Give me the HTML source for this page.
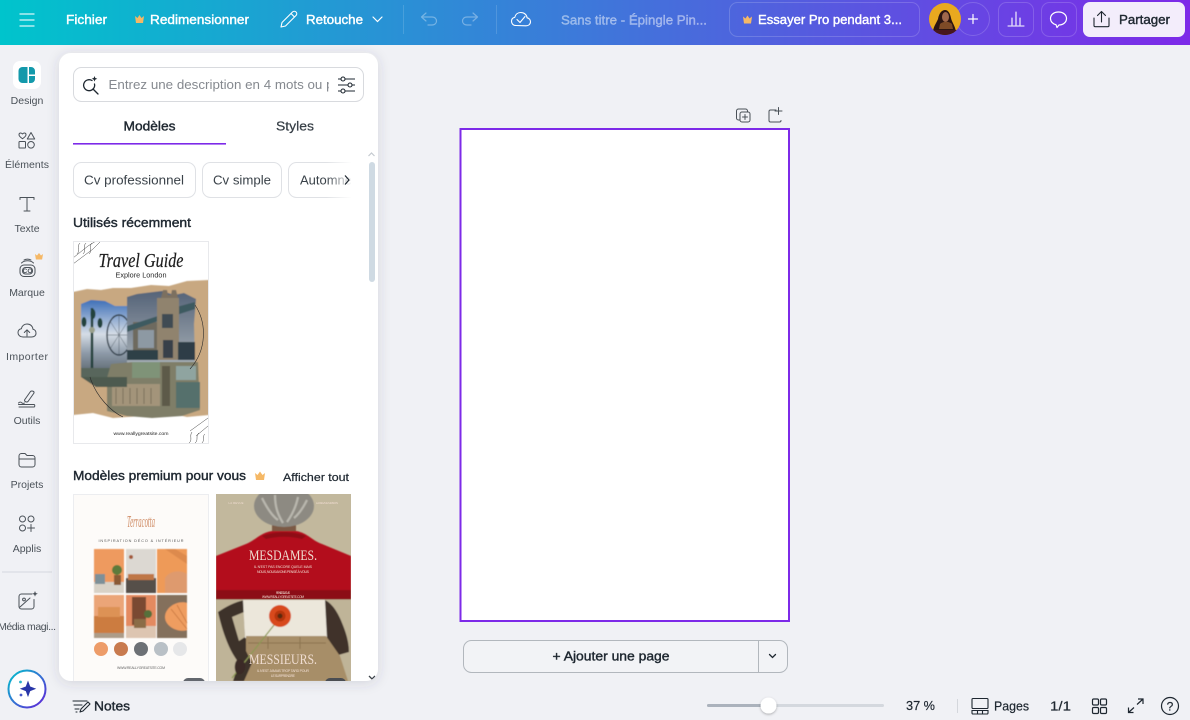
<!DOCTYPE html>
<html lang="fr"><head><meta charset="utf-8"><title>Canva</title>
<style>html,body{margin:0;padding:0;width:1190px;height:720px;overflow:hidden;background:#f0f1f5}svg{display:block;filter:blur(.25px)}text{font-family:"Liberation Sans",sans-serif}.mw{stroke:#fff;stroke-width:.4}.md{stroke:#1e2730;stroke-width:.4}.ms{stroke:#1e2730;stroke-width:.2}</style></head>
<body>
<svg xmlns="http://www.w3.org/2000/svg" width="1190" height="720" viewBox="0 0 1190 720">
<defs>
<linearGradient id="top" x1="0" x2="1" y1="0" y2="0"><stop offset="0" stop-color="#00c4cc"/><stop offset="1" stop-color="#7d2ae8"/></linearGradient>
<linearGradient id="ring" x1="0" x2="1" y1="0" y2="1"><stop offset="0" stop-color="#00c4cc"/><stop offset="1" stop-color="#6420d8"/></linearGradient>
<linearGradient id="sky" x1="0" x2="0" y1="0" y2="1"><stop offset="0" stop-color="#3f70b8"/><stop offset=".45" stop-color="#d5dde6"/><stop offset=".7" stop-color="#8d9aa8"/><stop offset="1" stop-color="#566068"/></linearGradient>
<linearGradient id="slate" x1="0" x2="0" y1="0" y2="1"><stop offset="0" stop-color="#556378"/><stop offset="1" stop-color="#a5aeb5"/></linearGradient>
<linearGradient id="fade" x1="0" x2="1" y1="0" y2="0"><stop offset="0" stop-color="#fff" stop-opacity="0"/><stop offset="1" stop-color="#fff"/></linearGradient>
<filter id="sh" x="-10%" y="-10%" width="120%" height="120%"><feDropShadow dx="0" dy="2" stdDeviation="6" flood-color="#39405a" flood-opacity=".16"/></filter>
<filter id="b" x="-5%" y="-5%" width="110%" height="110%"><feGaussianBlur stdDeviation=".6"/></filter>
<filter id="tsh" x="-50%" y="-50%" width="200%" height="200%"><feDropShadow dx="0" dy="1" stdDeviation="1.2" flood-opacity=".3"/></filter>
<clipPath id="panel"><rect x="59" y="53" width="319" height="628" rx="12"/></clipPath>
<clipPath id="c1"><rect x="73" y="494" width="136" height="187"/></clipPath>
<clipPath id="c2"><rect x="216" y="494" width="135" height="187"/></clipPath>
<clipPath id="c3"><rect x="73" y="241" width="136" height="203"/></clipPath>
<clipPath id="chips"><rect x="60" y="155" width="291" height="50"/></clipPath>
<clipPath id="search"><rect x="100" y="70" width="229" height="28"/></clipPath>
<clipPath id="av"><circle cx="945" cy="19" r="16"/></clipPath>
</defs>
<rect width="1190" height="720" fill="#f0f1f5"/>
<rect width="1190" height="45" fill="url(#top)"/>

<!-- topbar -->
<g stroke="#fff" stroke-width="1.300" fill="none" stroke-linecap="round" opacity=".85"><path d="M20 14H34M20 20H34M20 26H34"/></g>
<text x="66" y="24" font-size="13" class="mw" fill="#fff" textLength="41" lengthAdjust="spacingAndGlyphs">Fichier</text>
<path d="M135 16l2.500 2 2-3 2 3 2.500-2-1 7h-7z" fill="#f5b866"/>
<text x="150" y="24" font-size="13" class="mw" fill="#fff" textLength="99" lengthAdjust="spacingAndGlyphs">Redimensionner</text>
<path d="M281 27l1-4.500 10.500-10.500c1-1 2.500-1 3.500 0s1 2.500 0 3.500L285.500 26z M291 13.500l3.500 3.500" fill="none" stroke="#fff" stroke-width="1.100" stroke-linejoin="round"/>
<text x="306" y="24" font-size="13" class="mw" fill="#fff" textLength="57" lengthAdjust="spacingAndGlyphs">Retouche</text>
<path d="M373 17l4.500 4.500 4.500-4.500" fill="none" stroke="#fff" stroke-width="1.200" stroke-linecap="round"/>
<path d="M403.500 5V34M496.500 5V34" stroke="#fff" stroke-opacity=".14"/>
<g fill="none" stroke="#fff" stroke-opacity=".34" stroke-width="1.200" stroke-linecap="round" stroke-linejoin="round"><path d="M426 13l-4.500 4 4.500 4M422 17h10c3 0 4.500 2 4.500 4s-1.500 4-4.500 4h-4"/><path d="M473 13l4.500 4-4.500 4M477 17h-10c-3 0-4.500 2-4.500 4s1.500 4 4.500 4h4"/></g>
<path d="M516 25.500c-3 0-4.500-2-4.500-4.200 0-2 1.300-3.600 3.300-4 .6-3 3-4.800 6-4.800 3.500 0 6 2.300 6.300 5.300 1.800.4 3.400 1.900 3.400 4 0 2.500-2 4-4.500 4z M517 19.500l3 3 5-6" fill="none" stroke="#fff" stroke-width="1.100" stroke-linecap="round" stroke-linejoin="round"/>
<text x="561" y="24.500" font-size="13" fill="#fff" fill-opacity=".42" stroke="#fff" stroke-opacity=".42" stroke-width=".4" textLength="146" lengthAdjust="spacingAndGlyphs">Sans titre - Épingle Pin...</text>
<rect x="729.500" y="2.500" width="190" height="34" rx="8" fill="none" stroke="#fff" stroke-opacity=".17"/>
<path d="M743 16.500l2.500 2 2-3 2 3 2.500-2-1 7h-7z" fill="#f5b866"/>
<text x="758" y="24" font-size="13" class="mw" fill="#fff" textLength="144" lengthAdjust="spacingAndGlyphs">Essayer Pro pendant 3...</text>
<circle cx="973" cy="19" r="16.500" fill="none" stroke="#fff" stroke-opacity=".17"/>
<circle cx="945" cy="19" r="16" fill="#e9a91f"/>
<g clip-path="url(#av)"><path d="M933 36c-1-8 3-12 5-17 1-6 4-9 7-9s5 3 6 8c1 5 6 10 5 18z" fill="#2c1512"/><ellipse cx="945.500" cy="17" rx="3.500" ry="5" fill="#a0684c"/><path d="M940 24c3-3 9-3 12 0l1 5h-14z" fill="#7d4a26"/><rect x="932" y="30" width="28" height="6" fill="#47161f"/></g>
<path d="M973 14.500v9M968.500 19h9" stroke="#fff" stroke-width="1.200" stroke-linecap="round"/>
<rect x="998.500" y="2.500" width="35" height="34" rx="8" fill="none" stroke="#fff" stroke-opacity=".17"/>
<path d="M1008 26h16M1012 25V18M1016 25V12M1020 25V18" stroke="#fff" stroke-width="1.100" fill="none" stroke-linecap="round"/>
<rect x="1041.500" y="2.500" width="35" height="34" rx="8" fill="none" stroke="#fff" stroke-opacity=".17"/>
<path d="M1058.500 12c4.700 0 8 2.800 8 6.500s-3.300 6.500-7.500 6.500l-2 2.500-1-2.800c-3.300-.8-5.500-3.200-5.500-6.200 0-3.700 3.300-6.500 8-6.500z" fill="none" stroke="#fff" stroke-width="1.200" stroke-linejoin="round"/>
<rect x="1083" y="2" width="102" height="35" rx="7" fill="#f3edfb"/>
<path d="M1094 18v7.500c0 .8.500 1.200 1.200 1.200h12.600c.7 0 1.200-.4 1.200-1.200V18M1101.500 22V12M1097.500 15.500l4-4 4 4" fill="none" stroke="#1e2730" stroke-width="1.100" stroke-linecap="round" stroke-linejoin="round"/>
<text x="1119" y="24" font-size="13" class="md" fill="#1e2730" textLength="51" lengthAdjust="spacingAndGlyphs">Partager</text>

<!-- sidebar -->
<rect x="13" y="61" width="28" height="28" rx="7" fill="#fff"/>
<path d="M22.500 67H27.500V83H22.500a4 4 0 0 1-4-4v-8a4 4 0 0 1 4-4z" fill="#1399ab"/><path d="M29 67h2a4 4 0 0 1 4 4v3.500h-6zM29 76h6v3a4 4 0 0 1-4 4h-2z" fill="#1399ab"/>
<g font-size="10.500" fill="#4a5158" text-anchor="middle">
<text x="27" y="104">Design</text><text x="27" y="168" textLength="44">Éléments</text><text x="27" y="232">Texte</text><text x="27" y="296">Marque</text><text x="27" y="360" textLength="42">Importer</text><text x="27" y="424">Outils</text><text x="27" y="488">Projets</text><text x="27" y="552">Applis</text><text x="27" y="630" textLength="58">Média magi...</text>
</g>
<g fill="none" stroke="#4a5158" stroke-width="1" stroke-linejoin="round" stroke-linecap="round">
<path d="M22.500 134c-1-1.500-3.500-1.500-3.500.7 0 1.700 1.800 2.700 3.500 4 1.700-1.300 3.500-2.300 3.500-4 0-2.200-2.500-2.200-3.500-.7z"/><path d="M31 132.500l3.700 6.500h-7.400z"/><rect x="19" y="141.500" width="6.500" height="6.500" rx=".8"/><circle cx="31" cy="144.800" r="3.300"/>
<path d="M20 199.500v-2h14v2M27 197.500v13.500M24 211h6"/>
<rect x="20" y="265" width="15" height="11.500" rx="4"/><rect x="22.500" y="267.500" width="10" height="6.500" rx="3"/><path d="M21.500 263c3-3 9-3 12 0M24 260c2-1.200 5-1.200 7 0"/>
<path d="M23 337c-3 0-5-2-5-4.200 0-2 1.300-3.600 3.300-4 .6-3 3-4.800 5.700-4.800 3.500 0 5.700 2.300 6 5.300 1.800.4 3 1.900 3 4 0 2.500-2 3.700-4.500 3.700h-8.500zM27 336v-6M24.300 332.500l2.700-2.700 2.700 2.700"/>
<path d="M18.500 403c3-3 3 2 6 0M18.500 404.500h15.500c1 0 1 2.500 0 2.500H19M24.500 400l6-8.500c1-1 4-.5 3.500 1.500l-6 8.500c-1 1-3.500 .5-3.500-1.500z"/>
<path d="M19 456a2.500 2.500 0 0 1 2.500-2.500h3.500l2 2h5.500a2.500 2.500 0 0 1 2.500 2.500v6.500a2.500 2.500 0 0 1-2.500 2.500H21.500a2.500 2.500 0 0 1-2.500-2.500zM19 459h16"/>
<rect x="19.500" y="516" width="6" height="6" rx="3"/><rect x="28" y="516" width="6" height="6" rx="3"/><rect x="19.500" y="525" width="6" height="6" rx="3"/><path d="M31 524.500v7M27.500 528h7"/>
<path d="M32 594h-10.500a2.500 2.500 0 0 0-2.500 2.500v10a2.500 2.500 0 0 0 2.500 2.500h10a2.500 2.500 0 0 0 2.500-2.500v-7M20 607l10-9"/><circle cx="24" cy="599.500" r="1.400"/>
</g>
<path d="M35 591l.8 2 2 .8-2 .8-.8 2-.8-2-2-.8 2-.8z" fill="#4a5158"/>
<path d="M35 254l2 1.500 2-2.500 2 2.500 2-1.500-.9 5.500h-6.200z" fill="#f5b866"/>
<text x="27.500" y="273" font-size="6.500" font-weight="700" fill="#4a5158" text-anchor="middle">CO</text>
<rect x="2" y="571.500" width="50" height="1" fill="#d5d8df"/>
<circle cx="27" cy="689" r="18.500" fill="#fff" stroke="url(#ring)" stroke-width="2"/>
<path d="M28 680.500l2.200 6 6 2.300-6 2.300-2.200 6-2.200-6-6-2.300 6-2.300z" fill="#2936a8"/><circle cx="20.500" cy="682" r="1.400" fill="#2cb1c8"/><circle cx="21" cy="695" r="1.400" fill="#4657c9"/>

<!-- panel -->
<rect x="59" y="53" width="319" height="628" rx="12" fill="#fff" filter="url(#sh)"/>
<g clip-path="url(#panel)">
<rect x="73.500" y="67.500" width="290" height="34" rx="8" fill="#fff" stroke="#d8dade"/>
<path d="M92 80.500a5.500 5.500 0 1 0 2.500 3.500" fill="none" stroke="#1e2730" stroke-width="1.300" stroke-linecap="round"/><path d="M93 89l5 5" stroke="#1e2730" stroke-width="1.300" stroke-linecap="round"/><path d="M94.500 76l.8 2 2 .8-2 .8-.8 2-.8-2-2-.8 2-.8z" fill="#1e2730"/>
<g clip-path="url(#search)"><text x="108.500" y="89" font-size="13" fill="#85898f" textLength="225" lengthAdjust="spacingAndGlyphs">Entrez une description en 4 mots ou p</text></g>
<g stroke="#1e2730" stroke-width="1.100" fill="#fff"><path d="M338 79h17M338 85h17M338 91h17"/><circle cx="343" cy="79" r="2"/><circle cx="350" cy="85" r="2"/><circle cx="343" cy="91" r="2"/></g>
<text x="149.500" y="130.500" font-size="13" class="md" fill="#1e2730" text-anchor="middle" textLength="52" lengthAdjust="spacingAndGlyphs">Modèles</text>
<text x="295" y="130.500" font-size="13" fill="#3a4249" class="ms" text-anchor="middle" textLength="38" lengthAdjust="spacingAndGlyphs">Styles</text>
<rect x="73" y="143" width="153" height="1.600" fill="#7d2ae8"/>
<g clip-path="url(#chips)">
<rect x="73.500" y="162.500" width="122" height="35" rx="8" fill="#fff" stroke="#dfe1e5"/>
<rect x="202.500" y="162.500" width="79" height="35" rx="8" fill="#fff" stroke="#dfe1e5"/>
<rect x="288.500" y="162.500" width="90" height="35" rx="8" fill="#fff" stroke="#dfe1e5"/>
<g font-size="13" fill="#3a4249"><text x="84" y="184.500" textLength="100" lengthAdjust="spacingAndGlyphs">Cv professionnel</text><text x="213" y="184.500" textLength="58" lengthAdjust="spacingAndGlyphs">Cv simple</text><text x="300" y="184.500" textLength="52" lengthAdjust="spacingAndGlyphs">Automne</text></g>
<rect x="326" y="160" width="26" height="40" fill="url(#fade)"/>
</g>
<path d="M345 175.500l4 4.500-4 4.500" fill="none" stroke="#1e2730" stroke-width="1.200"/>
<text x="73" y="227" font-size="13" class="md" fill="#1e2730" textLength="118" lengthAdjust="spacingAndGlyphs">Utilisés récemment</text>

<!-- travel guide -->
<g clip-path="url(#c3)"><rect x="73" y="241" width="136" height="203" fill="#fff"/>
<g filter="url(#b)">
<path d="M73 292l14-3 14 1 12-2 18 0 20-3 18 1 18-5 22-1v135l-22 2-14-3-30 2-30 2-20-5-20 2z" fill="#c8a881"/>
<path d="M81 304l10-4 14 1 10 5 18 0v70l-20-1-10-3-22 1z" fill="url(#sky)"/>
<ellipse cx="119" cy="335" rx="12" ry="20" fill="none" stroke="#33404c" stroke-width="1.400"/><path d="M119 315v40M107 335h24M110 321l18 28M128 321l-18 28" stroke="#4b5762" stroke-width=".5"/>
<path d="M92 308v60" stroke="#22403a" stroke-width="2.500"/><ellipse cx="84" cy="322" rx="2.500" ry="5" fill="#24423c"/><ellipse cx="93" cy="314" rx="2.500" ry="5" fill="#24423c"/><ellipse cx="100" cy="323" rx="2.500" ry="5" fill="#24423c"/><circle cx="92" cy="330" r="3" fill="#9aa08c"/>
<path d="M81 368h52v10H98l-17-1z" fill="#58665c"/>
<path d="M127 297l10-3 25-3 12 4 10-2 12 6-2 25 1 38-68 1z" fill="url(#slate)"/>
<path d="M133 322h25v36h-25z" fill="#6e6a5e"/><path d="M138 330h16v18h-16z" fill="#8d99a3"/>
<path d="M158 312l37-10v7l-37 12zM127 326l31-10v5l-31 11z" fill="#3d5a60"/>
<rect x="157" y="298" width="22" height="62" fill="#90836e"/><path d="M161 298l2-8 4 0 1 5 3 0 1-5 4 0 2 8z" fill="#7c7060"/><rect x="162" y="314" width="11" height="14" fill="#3f4b52"/><rect x="163" y="340" width="10" height="18" fill="#37414a"/>
<rect x="178" y="342" width="17" height="18" fill="#2f3e46"/><path d="M127 350h31v10h-31z" fill="#2f4046"/>
<path d="M107 378l4-14 22-2 65 0 2 48-18 6-30 2-25-2-20-5z" fill="#7f7e68"/><path d="M112 384h48v22h-48z" fill="#a3947a"/><path d="M116 388v16M123 388v16M130 388v16M137 388v16M144 388v16M151 388v16" stroke="#7a6f5a"/><rect x="162" y="366" width="8" height="40" fill="#5d5a4a"/><path d="M176 382h24v26h-24z" fill="#55706c"/><path d="M132 362h28v16h-28z" fill="#7f9378"/><path d="M176 366h20v14h-20z" fill="#8fa4a0"/><path d="M81 377h46v10H96z" fill="#4e5a50"/>
</g>
<path d="M195 305c12 18 12 45-5 64M90 377c6 20 22 35 33 40" fill="none" stroke="#2a2a2a" stroke-width=".6"/>
<path d="M80 243c-4 4 1 7-3 11M86 243c-4 4 1 7-3 11M92 243c-4 4 1 7-3 11M73 264l20-15 8-8M73 258l15-12 8-5" fill="none" stroke="#444" stroke-width=".5"/>
<path d="M189 443c4-3 0-7 3-11M195 443c4-3 0-7 4-10M202 443c3-3 0-7 3-9M190 431l18-13M196 436l12-10" fill="none" stroke="#444" stroke-width=".5"/>
<text x="141" y="267" font-size="20" font-style="italic" fill="#1d1d1d" stroke="#1d1d1d" stroke-width=".2" text-anchor="middle" textLength="85" lengthAdjust="spacingAndGlyphs" style="font-family:'Liberation Serif',serif">Travel Guide</text>
<text x="141" y="277.500" font-size="7" fill="#2a2a2a" text-anchor="middle" textLength="51" lengthAdjust="spacingAndGlyphs">Explore London</text>
<text x="141" y="435" font-size="4.800" fill="#222" text-anchor="middle" textLength="55" lengthAdjust="spacingAndGlyphs">www.reallygreatsite.com</text>
</g>
<rect x="73.500" y="241.500" width="135" height="202" fill="none" stroke="#e8e9ec"/>

<text x="73" y="480" font-size="13" class="md" fill="#1e2730" textLength="173" lengthAdjust="spacingAndGlyphs">Modèles premium pour vous</text>
<path d="M255 473l2.500 2 2.500-3.500 2.500 3.500 2.500-2-1 7h-8z" fill="#f5b866"/>
<text x="283" y="481" font-size="11" fill="#1e2730" class="ms" textLength="66" lengthAdjust="spacingAndGlyphs">Afficher tout</text>

<!-- terracotta -->
<g clip-path="url(#c1)"><rect x="73" y="494" width="136" height="187" fill="#fdfbf9"/>
<text x="141" y="527" font-size="17" font-style="italic" fill="#cf8a63" text-anchor="middle" textLength="28" lengthAdjust="spacingAndGlyphs" style="font-family:'Liberation Serif',serif">Terracotta</text>
<text x="141" y="542" font-size="3.800" fill="#555" text-anchor="middle" textLength="85" lengthAdjust="spacing">INSPIRATION DÉCO &amp; INTÉRIEUR</text>
<g filter="url(#b)">
<rect x="94" y="549" width="30" height="44" fill="#ee9a5e"/><rect x="94" y="582" width="30" height="11" fill="#d8d2c7"/><rect x="95" y="574" width="10" height="10" fill="#7d9098"/><circle cx="117" cy="570" r="5" fill="#5d7a3a"/><path d="M114 575h7v10h-7z" fill="#8a5a35"/>
<rect x="126" y="549" width="30" height="44" fill="#dcd8d2"/><rect x="126" y="578" width="30" height="15" fill="#57504a"/><rect x="128" y="574" width="26" height="6" fill="#bf7747"/><circle cx="131" cy="557" r="2" fill="#a35a3a"/>
<rect x="157" y="549" width="30" height="44" fill="#ee9a58"/><path d="M165 549l22 15v-8l-12-7z" fill="#dd8a4e"/><path d="M165 578c5-8 16-8 22-4v19h-22z" fill="#de9a6e"/>
<rect x="94" y="595" width="30" height="43" fill="#eba578"/><rect x="94" y="616" width="30" height="17" fill="#cc7c3f"/><rect x="98" y="607" width="22" height="10" fill="#dd9254"/><rect x="94" y="633" width="30" height="5" fill="#ad9c88"/>
<rect x="126" y="595" width="30" height="43" fill="#e48a60"/><rect x="132" y="597" width="14" height="28" fill="#7a4a32"/><rect x="126" y="626" width="30" height="12" fill="#ddc5b1"/><circle cx="148" cy="614" r="4" fill="#56703a"/><rect x="134" y="619" width="12" height="9" fill="#8b6c46"/>
<rect x="157" y="595" width="30" height="43" fill="#84705b"/><path d="M187 603c-9-3-22 4-22 14s14 16 22 13z" fill="#ef9d60"/><path d="M171 609l16 20M177 605l10 18" stroke="#c97840" stroke-width=".8"/>
</g>
<circle cx="101" cy="649" r="7" fill="#ed9c69"/><circle cx="121" cy="649" r="7" fill="#c87a4e"/><circle cx="141" cy="649" r="7" fill="#6c7075"/><circle cx="161" cy="649" r="7" fill="#b9c0c6"/><circle cx="180" cy="649" r="7" fill="#e6e7e9"/>
<text x="141" y="669" font-size="3.500" fill="#666" text-anchor="middle" textLength="48" lengthAdjust="spacing">WWW.REALLYGREATSITE.COM</text>
<rect x="183" y="678" width="22" height="10" rx="5" fill="#63676e"/>
</g>
<rect x="73.500" y="494.500" width="135" height="190" fill="none" stroke="#eceDf0"/>

<!-- mesdames -->
<g clip-path="url(#c2)"><rect x="216" y="494" width="135" height="187" fill="#c2b89d"/>
<g filter="url(#b)">
<rect x="272" y="520" width="24" height="14" fill="#7c5a45"/>
<ellipse cx="284" cy="506" rx="30" ry="21" fill="#8d8a82"/><path d="M262 498c5 10 10 18 16 22M275 495c0 12 3 20 8 28M298 497c-2 10-6 18-11 25M307 500c-4 8-8 14-13 18" stroke="#b9b7ae" stroke-width="2.200" fill="none"/>
<path d="M216 556l30-12c10-4 14-11 26-13l24 0c12 2 15 9 26 13l29 12v36H216z" fill="#b30f1d"/><path d="M262 536c12-5 32-5 44 0l-4 3c-12-3-24-3-36 0z" fill="#8f0d17"/><path d="M216 590h135v9.500H216z" fill="#8c0a14"/>
<path d="M216 599.500h135V681H216z" fill="#bfb498"/>
<path d="M218 612c8-5 16-10 27-12l2 36 6 30-8 15h-12l6-18c-8-10-15-25-21-51z" fill="#3d3029"/><path d="M232 617l12-5 1 25-6 4z" fill="#bfb498"/>
<path d="M325 600c8 4 14 14 19 28 3 8 5 16 5 24l-14 4-11-20z" fill="#3f322b"/>
<path d="M243 600h82l2 38h-82z" fill="#ece7db"/>
<path d="M246 636h80l14 20 8 25H244l8-18-6-12z" fill="#a78e67"/><path d="M248 643h78M268 637v12M300 637v12" stroke="#8a7350" stroke-width="1" fill="none"/>
<path d="M232 678l46-58" stroke="#8d9a54" stroke-width="1.200"/><path d="M237 660c5-2 9 2 8 8-1 5-4 7-8 6-3-3-3-11 0-14z" fill="#3a2c25"/>
<circle cx="280" cy="616" r="11" fill="#d8481a"/><circle cx="280" cy="616" r="5.500" fill="#b53410"/><circle cx="280" cy="616" r="2.500" fill="#5a2a10"/>
</g>
<g fill="#efdcd0" text-anchor="middle">
<text x="283" y="560" font-size="15" textLength="68" lengthAdjust="spacingAndGlyphs" style="font-family:'Liberation Serif',serif">MESDAMES.</text>
<text x="283" y="568" font-size="3.500" textLength="58" lengthAdjust="spacing">IL N'EST PAS ENCORE QUELE MAIS</text>
<text x="283" y="573" font-size="3.500" textLength="52" lengthAdjust="spacing">NOUS, NOUS AVONS PENSÉ À VOUS</text>
<text x="283" y="594" font-size="3.200" textLength="14">RENDEZ-VOUS</text>
<text x="283" y="598" font-size="3.200" textLength="42">WWW.REALLYGREATSITE.COM</text>
<text x="283" y="664" font-size="15" textLength="68" lengthAdjust="spacingAndGlyphs" style="font-family:'Liberation Serif',serif">MESSIEURS.</text>
<text x="283" y="672" font-size="3.500" textLength="52" lengthAdjust="spacing">IL N'EST JAMAIS TROP TARD POUR</text>
<text x="283" y="677" font-size="3.500" textLength="24" lengthAdjust="spacing">LE SURPRENDRE</text>
<text x="236" y="504" font-size="2.800" textLength="15">LA REVUE</text><text x="327" y="504" font-size="2.800" textLength="22">LA REVUE MAISON</text>
</g>
<rect x="325" y="678" width="21" height="10" rx="5" fill="#4a4d52"/>
</g>
<rect x="369" y="162" width="6" height="120" rx="3" fill="#cfdae3"/>
<path d="M368.500 156l3-3 3 3" fill="none" stroke="#c5cad0" stroke-width="1.200"/>
<path d="M369 676l3 3 3-3" fill="none" stroke="#3c4249" stroke-width="1.300"/>
</g>

<!-- canvas -->
<rect x="460.500" y="129" width="328.500" height="492" fill="#fff" stroke="#7d2ae8" stroke-width="2"/>
<g fill="none" stroke="#4a5158" stroke-width="1" stroke-linejoin="round" stroke-linecap="round">
<path d="M740 120h-1.500a2 2 0 0 1-2-2v-7a2 2 0 0 1 2-2h7a2 2 0 0 1 2 2v1"/><rect x="740" y="112" width="10" height="10" rx="2"/><path d="M745 114.500v5M742.500 117h5"/>
<path d="M776 110h-5.500a1.500 1.500 0 0 0-1.500 1.500v9a1.500 1.500 0 0 0 1.500 1.500h9a1.500 1.500 0 0 0 1.500-1.500"/><path d="M778.500 107.500v7M775 111h7"/>
</g>
<rect x="463.500" y="640.500" width="324" height="32" rx="8" fill="#f2f3f6" stroke="#b2b7bd"/>
<path d="M758.500 640.500V672.500" stroke="#b2b7bd" stroke-width="1"/>
<text x="611" y="660.500" font-size="13" class="md" fill="#1e2730" text-anchor="middle" textLength="117" lengthAdjust="spacingAndGlyphs">+ Ajouter une page</text>
<path d="M769.500 654.500l3 3 3-3" fill="none" stroke="#1e2730" stroke-width="1.300" stroke-linecap="round"/>

<!-- bottom bar -->
<g fill="none" stroke="#1e2730" stroke-width="1.100" stroke-linecap="round" stroke-linejoin="round"><path d="M73 701h14M74 705h8M75 709h4M76 712h1"/><path d="M80 712l1-3 7-7 2 2-7 7z"/></g>
<text x="94" y="710.500" font-size="13" class="md" fill="#1e2730" textLength="36" lengthAdjust="spacingAndGlyphs">Notes</text>
<rect x="707" y="704" width="177" height="3" rx="1.500" fill="#d4d8de"/><rect x="707" y="704" width="62" height="3" rx="1.500" fill="#abb2bc"/>
<circle cx="768.500" cy="705.500" r="8" fill="#fff" filter="url(#tsh)"/>
<text x="906" y="710" font-size="13" fill="#1e2730" class="ms" textLength="29" lengthAdjust="spacingAndGlyphs">37 %</text>
<rect x="957" y="699" width="1" height="14" fill="#d4d7dc"/>
<g fill="none" stroke="#1e2730" stroke-width="1.100"><rect x="972" y="698.500" width="16" height="10" rx="1"/><path d="M972 710.500v2.500c0 .5.500 1 1 1h14c.5 0 1-.5 1-1v-2.500zM977.500 711v3M982.500 711v3"/></g>
<text x="994" y="710.500" font-size="13" fill="#1e2730" class="ms" textLength="35" lengthAdjust="spacingAndGlyphs">Pages</text>
<text x="1050" y="710.500" font-size="13" fill="#1e2730" class="ms" textLength="21" lengthAdjust="spacingAndGlyphs">1/1</text>
<g fill="none" stroke="#1e2730" stroke-width="1.200"><rect x="1092.500" y="699" width="6" height="6" rx="1.200"/><rect x="1100.500" y="699" width="6" height="6" rx="1.200"/><rect x="1092.500" y="707.500" width="6" height="6" rx="1.200"/><rect x="1100.500" y="707.500" width="6" height="6" rx="1.200"/></g>
<path d="M1137 704.500l5.500-5M1138 699h5v5M1134 707.500l-5.500 5M1128.500 707.500v5h5" fill="none" stroke="#1e2730" stroke-width="1.200"/>
<circle cx="1170" cy="706" r="8.500" fill="none" stroke="#1e2730" stroke-width="1.200"/>
<text x="1170" y="710.500" font-size="12" fill="#1e2730" class="ms" text-anchor="middle">?</text>
</svg>
</body></html>
